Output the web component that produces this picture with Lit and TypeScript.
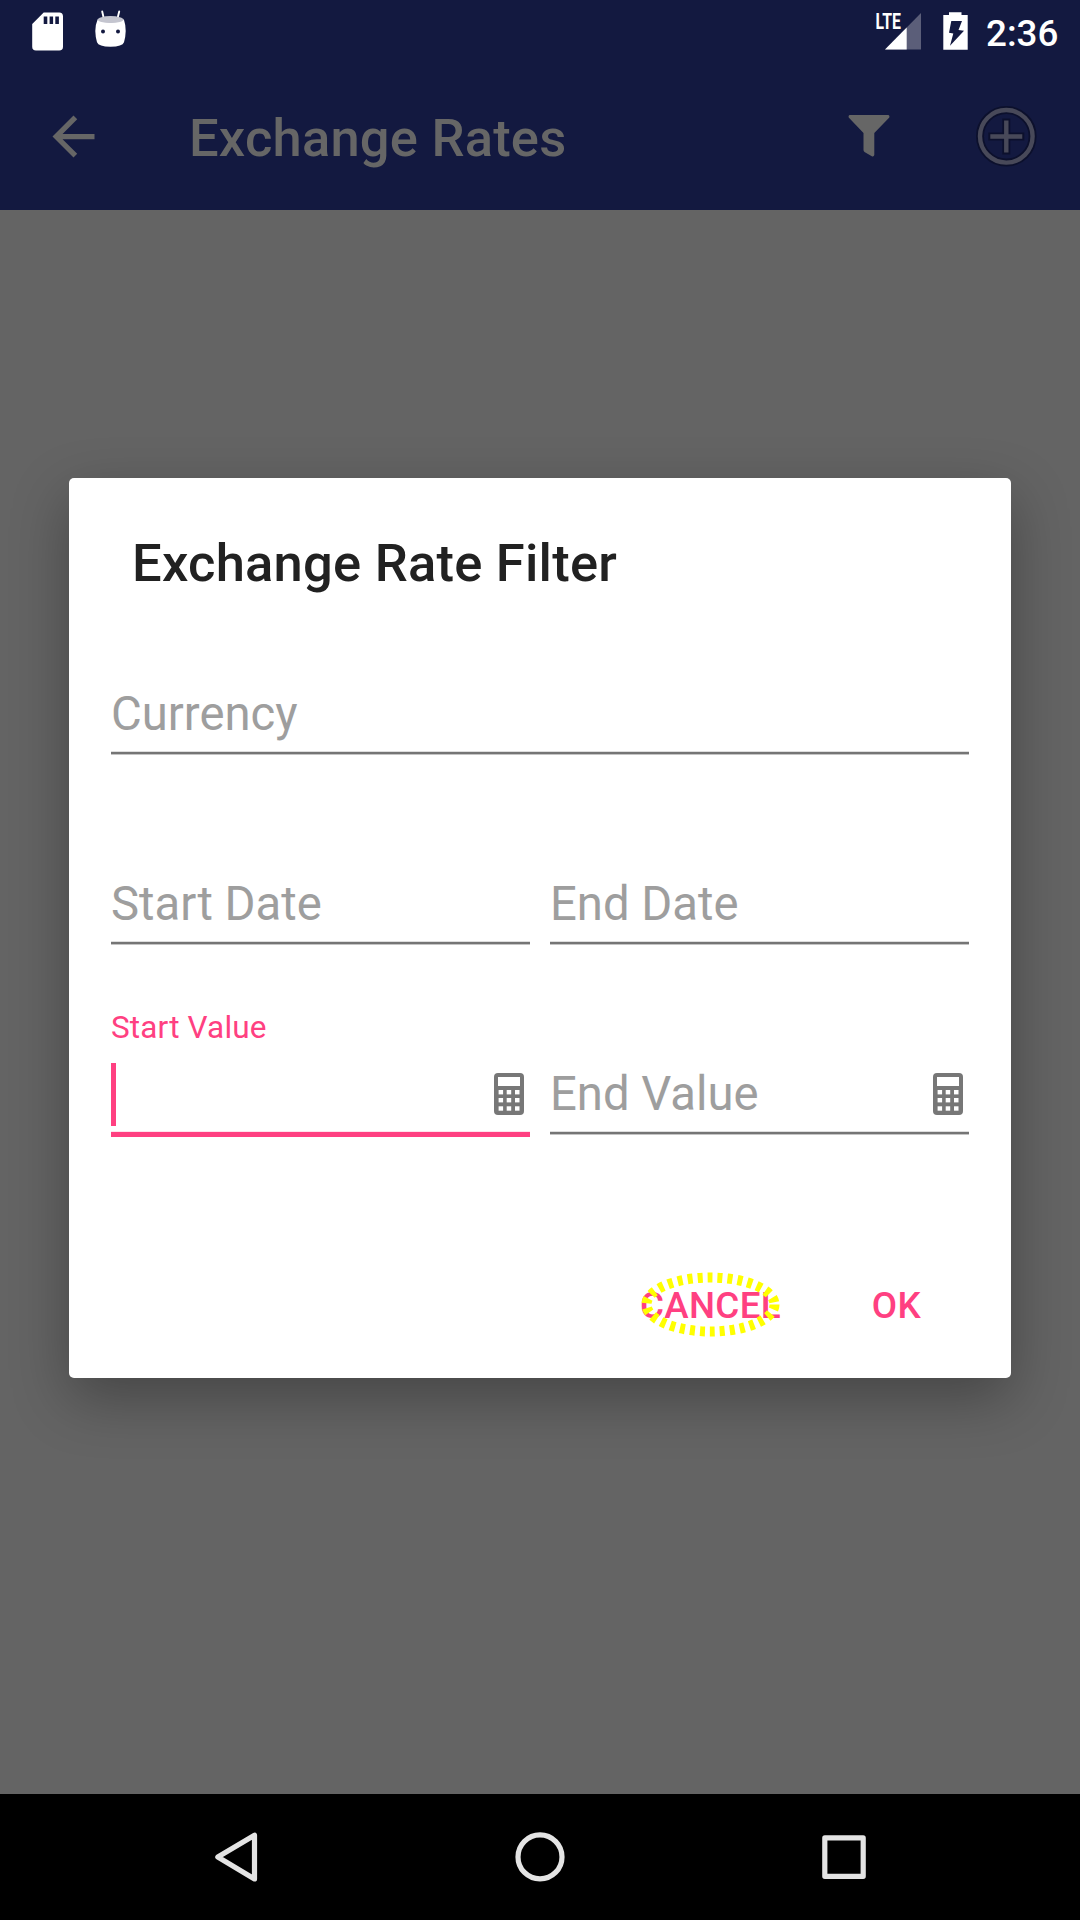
import { LitElement, html, css, svg, nothing } from "lit";
import { customElement, property } from "lit/decorators.js";

@customElement("status-bar")
class StatusBar extends LitElement {
  static styles = css`
    :host { display: flex; height: 63px; align-items: flex-start; justify-content: space-between; }
    svg { display: block; }
    .right { display: flex; align-items: flex-start; }
    .lte { font: 700 21.5px Roboto, sans-serif; fill: #fff; }
    .time { width: 94px; padding-top: 4px; font: 500 36.75px/60px Roboto, sans-serif; color: #fff; }
  `;
  render() {
    return html`
      <svg width="140" height="63" viewBox="0 0 140 63">
        <path fill="#fff" fill-rule="evenodd" d="M43.7 12.5H59.2A3.8 3.8 0 0 1 63 16.3V46.7A3.8 3.8 0 0 1 59.2 50.5H36A3.8 3.8 0 0 1 32.2 46.7V24ZM43.7 16.6V24H47.3V16.6ZM49.6 16.6V24H53.1V16.6ZM55.3 16.6V24H58.9V16.6Z"/>
        <path d="M102.2 11.500L103.800 18.500M119.200 11.500L117.500 18.500" stroke="#fff" stroke-width="1.900" stroke-linecap="round"/>
        <path fill="#fff" d="M97.6 19.5Q110.5 25 123.9 19.5Q125.5 24 125.7 31Q125.5 38 124 42.3Q122.500 46.700 110.500 46.700Q98.500 46.700 97 42.300Q95.500 38 95.300 31Q95.500 24 97.600 19.500Z"/>
        <ellipse cx="110.600" cy="19.600" rx="13" ry="3.500" fill="#c4c5cf"/>
        <circle cx="103" cy="31.500" r="2" fill="#131940"/>
        <circle cx="118" cy="31.500" r="2" fill="#131940"/>
      </svg>
      <div class="right">
        <svg width="116" height="63" viewBox="870 0 116 63">
          <path fill="#5b5e79" d="M921 13V49.500H885Z"/>
          <path fill="#fff" d="M906.700 27.500V49.500H885Z"/>
          <path fill="#131940" d="M870 10H901V29.500H870Z"/>
          <text class="lte" x="875.500" y="29.300" textLength="25.500" lengthAdjust="spacingAndGlyphs">LTE</text>
          <path fill="#fff" fill-rule="evenodd" d="M949 12.300H961.500V15H967.700V49.700H943.300V15H949ZM951.300 21L949 32.800L953.300 33.500L950 45.700L964 30.700L958.500 30L962 21Z"/>
        </svg>
        <div class="time">2:36</div>
      </div>
    `;
  }
}

@customElement("tool-bar")
class ToolBar extends LitElement {
  static styles = css`
    :host { display: flex; height: 147px; align-items: center; padding: 0 42px; }
    svg { display: block; flex: none; }
    .title { flex: 1; padding: 3px 0 0 84px; font: 500 52.5px/62px Roboto, sans-serif; letter-spacing: 0.2px; color: #666; }
    .filter { margin: 0 84px 1px 0; }
    .add { margin-bottom: 1px; }
  `;
  render() {
    return html`
      <svg width="63" height="63" viewBox="0 0 24 24"><path fill="#666" d="M20 11H7.830l5.590-5.590L12 4l-8 8 8 8 1.410-1.410L7.830 13H20v-2z"/></svg>
      <div class="title">Exchange Rates</div>
      <svg class="filter" width="42" height="42" viewBox="0 0 42 42">
        <path fill="#666" d="M1.500 0H40.500Q42 .5 41.300 2.500L26.300 18V40Q25.800 42 23.800 41.200L16.500 37Q15.500 36 15.500 35V18L.7 2.500Q0 .5 1.500 0Z"/>
      </svg>
      <svg class="add" width="64" height="64" viewBox="0 0 64 64">
        <g fill="none" stroke="#0c102c" stroke-width="8"><circle cx="32.300" cy="32.300" r="26.300"/><path d="M14.300 32.500H50.300M32.300 14.500V50.500"/></g>
        <g fill="none" stroke="#484959" stroke-width="4.400"><circle cx="32.300" cy="32.300" r="26.300"/><path d="M16.300 32.500H48.300M32.300 16.500V48.500"/></g>
      </svg>
    `;
  }
}

@customElement("filter-field")
class FilterField extends LitElement {
  @property() label = "";
  @property({ type: Boolean, reflect: true }) active = false;
  @property({ type: Boolean }) calc = false;
  static styles = css`
    :host { display: flex; flex-direction: column; flex: 1; height: 128px; }
    .label { height: 37px; margin-bottom: 17px; font: 400 31.5px/37px Roboto, sans-serif; letter-spacing: 0.15px; color: #ff4081; }
    .box { display: flex; align-items: center; justify-content: space-between; height: 63px; padding-right: 6px; margin-bottom: 5px; }
    .hint { font: 400 47.25px/63px Roboto, sans-serif; color: #9e9e9e; }
    .caret { width: 5px; height: 63px; background: #ff4081; }
    .line { height: 2px; background: #757575; border-top: 1px solid #dedede; border-bottom: 1px solid #c4c4c4; }
    :host([active]) .line { height: 5px; background: #ff4081; border-top-color: #ffe3ec; border-bottom: 0; }
    svg { display: block; margin-bottom: 1px; }
  `;
  render() {
    return html`
      <div class="label">${this.active ? this.label : nothing}</div>
      <div class="box">
        ${this.active ? html`<div class="caret"></div>` : html`<div class="hint">${this.label}</div>`}
        ${this.calc
          ? html`<svg width="30" height="42" viewBox="0 0 30 42">
              <rect width="30" height="42" rx="4" fill="#777"/>
              <rect x="4" y="4" width="22" height="9" fill="#fff"/>
              ${[17, 25, 33.3].map((y) => [4.600, 12.700, 21].map((x) => svg`<rect x=${x} y=${y} width="4.500" height="4.400" fill="#fff"/>`))}
            </svg>`
          : nothing}
      </div>
      <div class="line"></div>
    `;
  }
}

@customElement("app-root")
class AppRoot extends LitElement {
  static styles = css`
    :host { display: flex; flex-direction: column; width: 1080px; height: 1920px; background: #646464; overflow: hidden; }
    .header { height: 210px; background: #131940; }
    .main { flex: 1; padding: 268px 69px 0; }
    .dialog { box-sizing: border-box; height: 900px; padding: 54px 42px 0; border-radius: 5px; background: #fff; box-shadow: 0 20px 58px rgba(0, 0, 0, 0.31); display: flex; flex-direction: column; }
    .heading { padding-left: 21px; margin-bottom: 35px; font: 500 52.5px/62px Roboto, sans-serif; letter-spacing: 0.23px; color: #212121; }
    .fields { display: flex; flex-direction: column; gap: 62px; }
    .row { display: flex; gap: 20px; }
    .actions { display: flex; justify-content: flex-end; gap: 91px; padding-right: 48px; margin-top: 147px; font: 500 36.75px/44px Roboto, sans-serif; letter-spacing: 0.3px; color: #ff4081; }
    .cancel { position: relative; }
    .mark { position: absolute; left: 0; top: -13px; display: block; }
    .nav { display: flex; height: 126px; align-items: center; background: #000; }
    .nav svg { display: block; }
  `;
  render() {
    return html`
      <div class="header"><status-bar></status-bar><tool-bar></tool-bar></div>
      <div class="main">
        <div class="dialog">
          <div class="heading">Exchange Rate Filter</div>
          <div class="fields">
            <div class="row"><filter-field label="Currency"></filter-field></div>
            <div class="row"><filter-field label="Start Date"></filter-field><filter-field label="End Date"></filter-field></div>
            <div class="row"><filter-field label="Start Value" active calc></filter-field><filter-field label="End Value" calc></filter-field></div>
          </div>
          <div class="actions">
            <div class="cancel">CANCEL
              <svg class="mark" width="140" height="66" viewBox="0 0 140 66"><ellipse cx="70.500" cy="33.500" rx="64" ry="27" fill="none" stroke="#ff0" stroke-width="10" stroke-dasharray="5 5"/></svg>
            </div>
            <div>OK</div>
          </div>
        </div>
      </div>
      <div class="nav">
        <svg width="1080" height="126" viewBox="0 0 1080 126" fill="none" stroke="#e4e4e4" stroke-width="5.200" stroke-linejoin="round">
          <path d="M217.800 63L254.500 41.200V84.900Z"/>
          <circle cx="540" cy="62.900" r="22"/>
          <rect x="824.800" y="43.900" width="38.400" height="38.400"/>
        </svg>
      </div>
    `;
  }
}
